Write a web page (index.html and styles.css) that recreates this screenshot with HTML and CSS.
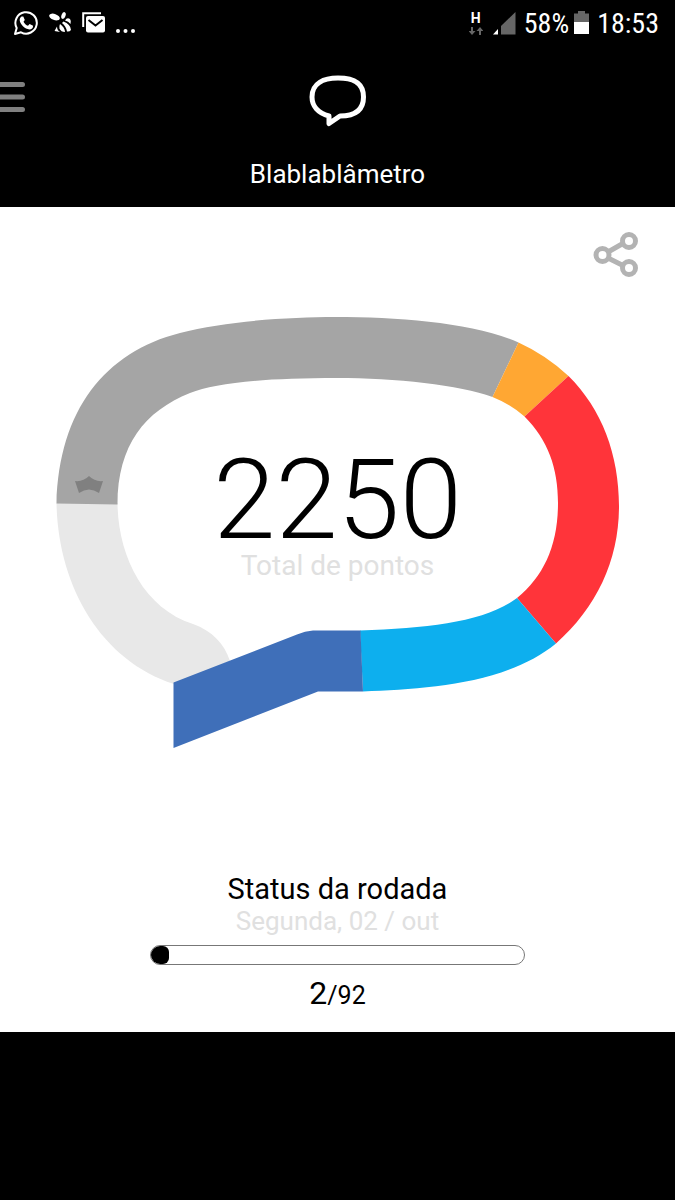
FILE: index.html
```html
<!DOCTYPE html>
<html lang="pt-BR">
<head>
  <meta charset="UTF-8" />
  <meta name="viewport" content="width=device-width, initial-scale=1.0" />
  <title>Blablablâmetro</title>
  <link rel="stylesheet" href="styles.css">
</head>
<body>
  <div class="status-bar">
    <div class="notifications">
      <svg width="26" height="26" viewBox="0 0 26 26">
        <path d="M2 24l1.700-6A10.700 10.700 0 1 1 8 22.300z" fill="none" stroke="#fff" stroke-width="2" stroke-linejoin="round" />
        <path d="M8.500 6.500h1.800l1.500 3.500-1.300 1.700c1 2 2.500 3.300 4.500 4.100l1.600-1.700 3.500 1.700c0 2.500-1.500 3.700-3.700 3.700-4.500-.4-9.400-5.200-9.700-9.200 0-1.700.7-3 1.800-3.800z" fill="#fff" />
      </svg>
      <svg width="23" height="22" viewBox="0 0 23 22" fill="#fff">
        <ellipse cx="5.500" cy="5" rx="5.500" ry="3" transform="rotate(20 5.500 5)" />
        <ellipse cx="14.500" cy="3.500" rx="2" ry="3.500" transform="rotate(20 14.500 3.500)" />
        <path d="M16 8.500q2-3.500 5-1.500 1.500 2 .5 5-2-3-5.500-3.500z" />
        <path d="M14.500 9.500q7 2.500 7.500 8.500-1.500 2-4 1.500-1-5.500-5-8.500z" />
        <path d="M11 12q4.500 3 5 8-4 0-5.500-3.500-.5-2.500.5-4.500z" />
        <path d="M8 14.500q0 3.500 3 5.500l-5.500-1z" />
      </svg>
      <svg width="24" height="22" viewBox="0 0 24 22">
        <path d="M1.200 15V1.200H19" fill="none" stroke="#fff" stroke-width="2" />
        <rect x="4" y="4" width="19" height="16.500" rx="2" fill="#fff" />
        <path d="M6.500 8l7 5.500L20.500 8" fill="none" stroke="#000" stroke-width="2" />
      </svg>
      <svg width="20" height="22" viewBox="0 0 20 22" fill="#fff">
        <circle cx="2" cy="19" r="2" /><circle cx="9.500" cy="19" r="2" /><circle cx="17" cy="19" r="2" />
      </svg>
    </div>
    <div class="system">
      <div class="network">
        <span>H</span>
        <svg width="14" height="8" viewBox="0 0 14 8" fill="#666">
          <path d="M2 0h2v4h2.500L3 8-.5 4H2zM10 8h2V4h2.500L11 0 7.500 4H10z" />
        </svg>
      </div>
      <svg width="23" height="23" viewBox="0 0 23 23">
        <path d="M0 22.500L5 17v5.500z" fill="#fff" />
        <path d="M8 22.500V14L22.500 0v22.500z" fill="#666" />
      </svg>
      <span class="clock battery">58%</span>
      <svg width="15" height="24" viewBox="0 0 15 24">
        <path d="M0 2.500h4V0h7v2.500h4V12H0z" fill="#666" />
        <path d="M0 11h15v12H0z" fill="#fff" />
      </svg>
      <span class="clock">18:53</span>
    </div>
  </div>

  <header>
    <button class="menu" aria-label="Menu">
      <svg width="25" height="30" viewBox="0 0 25 30">
        <path d="M-3 2.500H22.500M-3 15H22.500M-3 27.500H22.500" stroke="#808080" stroke-width="5" stroke-linecap="round" />
      </svg>
    </button>
    <svg class="logo" width="58" height="52" viewBox="0 0 58 52">
      <path d="M29 3C42 3 54.500 6 54.500 22C54.500 37 44 41 31 41L20 48.500V41C9 38 3 31 3 22C3 8 15 3 29 3Z" fill="none" stroke="#fff" stroke-width="5" stroke-linejoin="round" />
    </svg>
    <h1>Blablablâmetro</h1>
  </header>

  <main>
    <button class="share" aria-label="Compartilhar">
      <svg width="46" height="46" viewBox="0 0 46 46" fill="none" stroke="#b3b3b3" stroke-width="5">
        <path d="M15 20L29 12M15 26L29 33" />
        <circle cx="9.500" cy="23" r="6.500" />
        <circle cx="36" cy="9" r="6.500" />
        <circle cx="36" cy="36" r="6.500" />
      </svg>
    </button>

    <section class="gauge">
      <svg class="gauge-ring" viewBox="56 316 564 433">
        <path fill="#e8e8e8" d="M56.500 503C58 585 100 660 174 684L230 661C224 643 212 631 193 624C143 608 118 555 117.500 503Z" />
        <path fill="#a5a5a5" d="M56.500 503.500C59 410 105 352 180 333C225 321 290 317 335 317C400 317 475 323 518.500 342.500L492.500 397C460 385 395 378 337 378C262 378 215 383 190 393C145 411 117.500 445 117.500 504.500Z" />
        <path fill="#ffa733" d="M518.500 342.500Q546 355 568.500 376L524.500 416.500Q510 404 492.500 397Z" />
        <path fill="#ff343a" d="M568.500 376C602 409 619 455 619 506C619 560 597 607 556 643.500L517 598C544 576 558 545 558 503C558 468 548 440 524.500 416.500Z" />
        <path fill="#0dafee" d="M556 643.500C505 685 425 689 363 691.500L360 630.500C430 628 485 622 517 598Z" />
        <path fill="#3f6fb9" d="M173.500 682.500L297 634.500Q305 631 313 630.500H360.500L363 691.500H318L173.500 748Z" />
        <!-- crown on the record segment -->
        <path fill="#808080" d="M75 481Q83 482 89 476Q95 482 103 481L99 493Q89 486 79 493Z" />
      </svg>
      <div class="score">
        <div class="points">2250</div>
        <div class="caption">Total de pontos</div>
      </div>
    </section>

    <section class="round">
      <h2>Status da rodada</h2>
      <div class="date">Segunda, 02 / out</div>
      <div class="bar" role="progressbar" aria-label="Status da rodada" aria-valuenow="2" aria-valuemin="0" aria-valuemax="92">
        <div class="bar-fill" style="width: 2.17%"></div>
      </div>
      <div class="count"><span>2</span>/92</div>
    </section>
  </main>
</body>
</html>
```
FILE: styles.css
```css
:root {
  --ink: #000;
  --muted: #e0e0e0;
}

body {
  margin: 0;
  min-height: 100vh;
  font-family: Roboto, sans-serif;
  background-color: #000;
  color: var(--ink);
}

h1, h2 {
  margin: 0;
  font-weight: normal;
}

button {
  padding: 0;
  border: none;
  background: none;
  cursor: pointer;
}

svg {
  display: block;
}

.status-bar {
  display: flex;
  justify-content: space-between;
  align-items: center;
  height: 46px;
  padding: 0 16px 0 13px;
  color: #fff;
}

.notifications, .system {
  display: flex;
  align-items: center;
  gap: 10px;
}

.system {
  gap: 8px;
}

.network {
  display: flex;
  flex-direction: column;
  align-items: center;
  gap: 2px;
  margin-right: 2px;
  font-size: 14px;
  font-weight: bold;
  line-height: 14px;
}

.clock {
  font-family: "Roboto Condensed", Roboto, sans-serif;
  font-size: 28px;
}

.battery {
  margin-right: -3px;
}

header {
  display: grid;
  grid-template-columns: 1fr auto 1fr;
  row-gap: 32px;
  padding: 29px 0 18px;
  color: #fff;
}

.menu {
  justify-self: start;
  align-self: start;
  padding-top: 7px;
}

h1 {
  grid-column: 1 / -1;
  text-align: center;
  font-size: 26px;
  line-height: 30px;
}

main {
  display: flex;
  flex-direction: column;
  align-items: center;
  padding: 25px 36px 20px;
  background-color: #fff;
}

.share {
  align-self: flex-end;
}

.gauge {
  display: grid;
  width: 100%;
  max-width: 564px;
  margin-top: 38px;
}

.gauge-ring, .score {
  grid-area: 1 / 1;
}

.gauge-ring {
  width: 100%;
}

.score {
  padding-top: 134px;
  text-align: center;
}

.points {
  font-size: 112px;
  font-weight: 300;
  line-height: 100px;
}

.caption {
  color: var(--muted);
  font-size: 28px;
  line-height: 32px;
}

.round {
  display: flex;
  flex-direction: column;
  align-items: center;
  width: 100%;
  margin-top: 124px;
}

h2 {
  font-size: 29px;
  line-height: 32px;
}

.date {
  color: var(--muted);
  font-size: 26px;
  line-height: 32px;
}

.bar {
  box-sizing: border-box;
  width: 375px;
  max-width: 100%;
  height: 20px;
  margin: 8px 0 12px;
  border: 1px solid #777;
  border-radius: 10px;
  overflow: hidden;
}

.bar-fill {
  min-width: 18px;
  height: 100%;
  border-radius: 0 6px 6px 0;
  background-color: var(--ink);
}

.count {
  font-size: 25px;
  line-height: 32px;
}

.count span {
  font-size: 32px;
}
```
